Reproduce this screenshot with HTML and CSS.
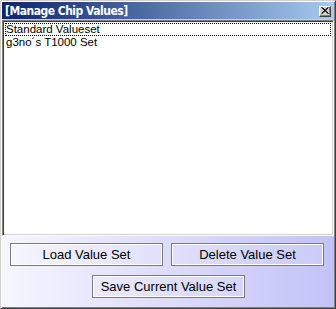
FILE: index.html
```html
<!DOCTYPE html>
<html>
<head>
<meta charset="utf-8">
<link rel="stylesheet" href="styles.css">
</head>
<body>
<div class="window">
  <div class="titlebar">
    <span class="title">[Manage Chip Values]</span>
    <span class="close"><svg width="8" height="7" viewBox="0 0 8 7"><path d="M0.5 0.5 L7 6.5 M1.5 0.5 L7.5 6.5 M7 0.5 L0.5 6.5 M7.5 0.5 L1 6.5" stroke="#000" stroke-width="1" fill="none"/></svg></span>
  </div>
  <div class="listbox">
    <div class="item focused">Standard Valueset</div>
    <div class="item">g3no´s T1000 Set</div>
  </div>
  <div class="panel">
    <div class="row">
      <button class="btn">Load Value Set</button>
      <button class="btn">Delete Value Set</button>
    </div>
    <div class="row center">
      <button class="btn">Save Current Value Set</button>
    </div>
  </div>
</div>
</body>
</html>
```
FILE: styles.css
```css
html, body { margin: 0; padding: 0; }
body { width: 336px; height: 309px; overflow: hidden; background: #d4d0c8; }
.window {
  width: 336px; height: 309px; box-sizing: border-box;
  border: 1px solid; border-color: #d4d0c8 #404040 #404040 #d4d0c8;
  box-shadow: inset 1px 1px 0 #ffffff, inset -1px -1px 0 #808080;
  padding: 1px;
  display: flex; flex-direction: column;
  background: #d4d0c8;
}
.titlebar {
  height: 17px; flex: none;
  background: linear-gradient(to right, #0a246a, #a6caf0);
  display: flex; align-items: center;
  padding: 0 2px 0 3px;
}
.title {
  color: #fff; font-family: "DejaVu Sans Condensed", "DejaVu Sans", sans-serif;
  font-weight: bold; font-size: 12px; letter-spacing: -0.5px;
  padding-top: 1px;
}
.close {
  margin-left: auto; width: 12px; height: 11px; box-sizing: border-box;
  background: #d4d0c8;
  border: 1px solid; border-color: #ffffff #404040 #404040 #ffffff;
  box-shadow: inset -1px -1px 0 #808080;
  display: flex; align-items: center; justify-content: center;
  margin-top: 1px; margin-right: 1px;
}
.close svg { display: block; margin-left: -1px; margin-top: -1px; }
.listbox {
  margin-top: 1px;
  height: 216px; flex: none; box-sizing: border-box;
  background: #fff;
  border: 1px solid; border-color: #808080 #ffffff #ffffff #808080;
  box-shadow: inset 1px 1px 0 #404040, inset -1px -1px 0 #d4d0c8;
  padding: 2px 2px;
  font-family: "Liberation Sans", Arial, sans-serif; font-size: 11.5px; color: #000;
}
.item { height: 13px; line-height: 13px; padding-left: 1px; box-sizing: border-box; }
.item.focused { outline: 1px dotted #000; outline-offset: -1px; }
.panel {
  flex: 1;
  background: linear-gradient(to right, #f6f6fe, #c2c2f8);
  padding: 7px 8px 0 8px;
  display: flex; flex-direction: column; gap: 9px;
}
.row { display: grid; grid-template-columns: 153px 153px; gap: 8px; }
.row.center { display: flex; justify-content: center; padding-left: 1px; }
.btn {
  height: 23px; width: 153px; box-sizing: border-box;
  background: rgba(255,255,255,0.12);
  border: 1px solid #7a7a7a;
  box-shadow: inset 1px 1px 0 #ffffff, inset -1px -1px 0 #ffffff;
  font-family: "Liberation Sans", Arial, sans-serif; font-size: 13px; color: #000;
  padding: 0; margin: 0;
}
```
